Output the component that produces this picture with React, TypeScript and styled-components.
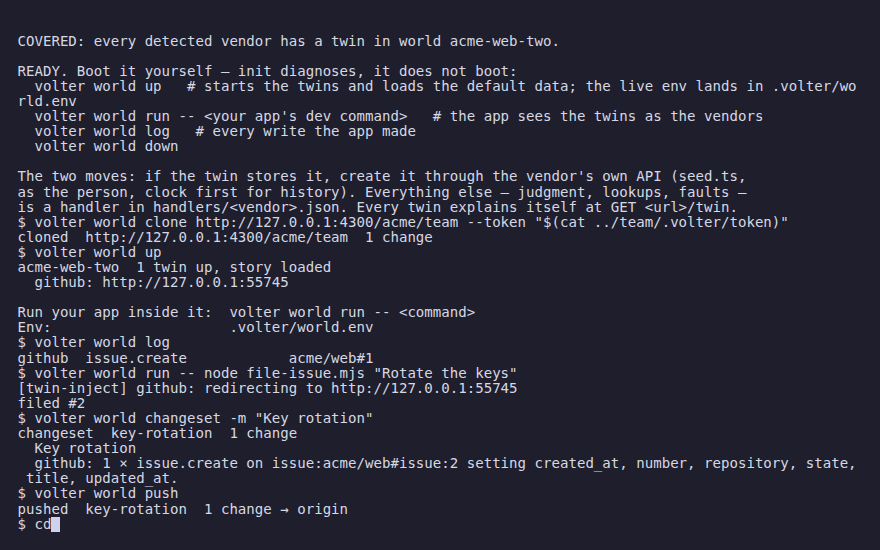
import React from "react";
import styled, { createGlobalStyle } from "styled-components";

const Global = createGlobalStyle`
  html, body {
    margin: 0;
    padding: 0;
    background: #1e1e2c;
  }
  body {
    width: 880px;
    height: 550px;
    overflow: hidden;
  }
`;

const Terminal = styled.div`
  box-sizing: border-box;
  width: 880px;
  height: 550px;
  padding: 33.6px 0 0 17.5px;
  background: #1e1e2c;
  color: #d6d8e4;
  font-family: "DejaVu Sans Mono", "Liberation Mono", monospace;
  font-size: 14.08px;
  line-height: 15.1px;
  display: flex;
  flex-direction: column;
`;

const Line = styled.div`
  white-space: pre;
  height: 15.1px;
`;

const Cursor = styled.span`
  display: inline-block;
  width: 8.5px;
  height: 15px;
  vertical-align: top;
  background: #cfd2ee;
`;

const lines: string[] = [
  "COVERED: every detected vendor has a twin in world acme-web-two.",
  "",
  "READY. Boot it yourself \u2013 init diagnoses, it does not boot:",
  "  volter world up   # starts the twins and loads the default data; the live env lands in .volter/wo",
  "rld.env",
  "  volter world run -- <your app's dev command>   # the app sees the twins as the vendors",
  "  volter world log   # every write the app made",
  "  volter world down",
  "",
  "The two moves: if the twin stores it, create it through the vendor's own API (seed.ts,",
  "as the person, clock first for history). Everything else \u2013 judgment, lookups, faults \u2013",
  "is a handler in handlers/<vendor>.json. Every twin explains itself at GET <url>/twin.",
  "$ volter world clone http://127.0.0.1:4300/acme/team --token \"$(cat ../team/.volter/token)\"",
  "cloned  http://127.0.0.1:4300/acme/team  1 change",
  "$ volter world up",
  "acme-web-two  1 twin up, story loaded",
  "  github: http://127.0.0.1:55745",
  "",
  "Run your app inside it:  volter world run -- <command>",
  "Env:                     .volter/world.env",
  "$ volter world log",
  "github  issue.create            acme/web#1",
  "$ volter world run -- node file-issue.mjs \"Rotate the keys\"",
  "[twin-inject] github: redirecting to http://127.0.0.1:55745",
  "filed #2",
  "$ volter world changeset -m \"Key rotation\"",
  "changeset  key-rotation  1 change",
  "  Key rotation",
  "  github: 1 \u00d7 issue.create on issue:acme/web#issue:2 setting created_at, number, repository, state,",
  " title, updated_at.",
  "$ volter world push",
  "pushed  key-rotation  1 change \u2192 origin",
];

export default function App() {
  return (
    <>
      <Global />
      <Terminal>
        {lines.map((l, i) => (
          <Line key={i}>{l}</Line>
        ))}
        <Line>
          {"$ cd"}
          <Cursor />
        </Line>
      </Terminal>
    </>
  );
}
